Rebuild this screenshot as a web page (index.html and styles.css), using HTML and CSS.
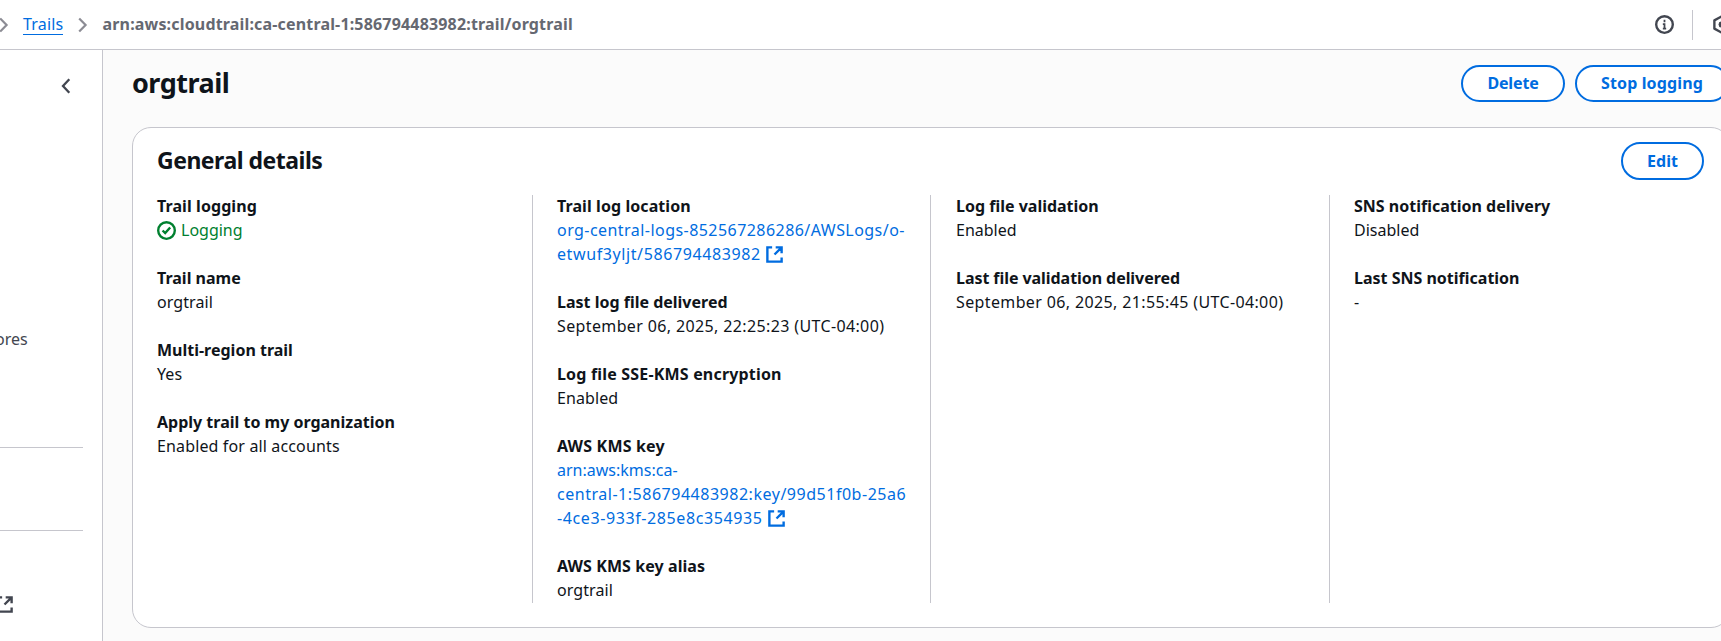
FILE: index.html
```
<!DOCTYPE html>
<html lang="en">
<head>
<meta charset="utf-8">
<title>orgtrail</title>
<link rel="stylesheet" href="styles.css">
</head>
<body>
<svg class="defs" aria-hidden="true">
  <symbol id="external" viewBox="0 0 16 16"><path d="M9 2h5v5M8 8l6-6M14 10.500V14H2V2h4" fill="none" stroke="currentColor" stroke-width="2"/></symbol>
  <symbol id="crumb" viewBox="0 0 10 16"><path d="M1.2 1.4 7.6 8l-6.400 6.600" fill="none" stroke="currentColor" stroke-width="2.200"/></symbol>
</svg>
<header class="topbar">
  <nav class="crumbs">
    <svg class="crumb-icon"><use href="#crumb"/></svg>
    <a class="crumb-link" href="#">Trails</a>
    <svg class="crumb-icon"><use href="#crumb"/></svg>
    <span class="crumb-current">arn:aws:cloudtrail:ca-central-1:586794483982:trail/orgtrail</span>
  </nav>
  <div class="tools">
    <svg class="tool-icon" viewBox="0 0 16 16"><circle cx="8" cy="8" r="7" fill="none" stroke="currentColor" stroke-width="2"/><path d="M8 4v2M6.600 7.600H8V12M6.600 11.400h2.800" fill="none" stroke="currentColor" stroke-width="1.500"/></svg>
    <span class="tool-divider"></span>
    <svg class="tool-icon" viewBox="0 0 16 16"><path d="M8 1.200 14 4.500v7L8 14.800 2 11.500v-7Z" fill="none" stroke="currentColor" stroke-width="2" stroke-linejoin="round"/><circle cx="8" cy="8" r="2.500" fill="currentColor"/></svg>
  </div>
</header>
<div class="body">
  <aside class="sidebar">
    <svg class="collapse" viewBox="0 0 10 16"><path d="M8.300 1.300 2 8l6.300 6.700" fill="none" stroke="currentColor" stroke-width="2.300"/></svg>
    <span class="side-item">ores</span>
    <hr class="side-rule rule-first">
    <hr class="side-rule rule-second">
    <svg class="ext side-ext"><use href="#external"/></svg>
  </aside>
  <main class="main">
    <div class="page-head">
      <h1>orgtrail</h1>
      <div class="actions">
        <button class="btn btn-delete">Delete</button>
        <button class="btn btn-stop">Stop logging</button>
      </div>
    </div>
    <section class="card">
      <div class="card-head">
        <h2>General details</h2>
        <button class="btn btn-edit">Edit</button>
      </div>
      <div class="columns">
        <dl class="col">
          <div><dt class="w-open">Trail logging</dt><dd class="status"><svg class="status-icon" viewBox="0 0 16 16"><circle cx="8" cy="8" r="7" fill="none" stroke="currentColor" stroke-width="2"/><path d="m4.700 8 2.200 2.200 4.200-4.800" fill="none" stroke="currentColor" stroke-width="2"/></svg>Logging</dd></div>
          <div><dt>Trail name</dt><dd class="w-open">orgtrail</dd></div>
          <div><dt>Multi-region trail</dt><dd class="w-open">Yes</dd></div>
          <div><dt>Apply trail to my organization</dt><dd class="w-wide">Enabled for all accounts</dd></div>
        </dl>
        <dl class="col">
          <div><dt class="w-open">Trail log location</dt><dd class="link"><span class="w-bucket">org-central-logs-852567286286/AWSLogs/o-</span><br><span class="w-id">etwuf3yljt/586794483982</span><svg class="ext ext-near"><use href="#external"/></svg></dd></div>
          <div><dt>Last log file delivered</dt><dd class="w-date">September 06, 2025, 22:25:23 (UTC-04:00)</dd></div>
          <div><dt class="w-caps">Log file SSE-KMS encryption</dt><dd class="w-open">Enabled</dd></div>
          <div><dt class="w-caps">AWS KMS key</dt><dd class="link">arn:aws:kms:ca-<br><span class="w-key">central-1:586794483982:key/99d51f0b-25a6</span><br><span class="w-id">-4ce3-933f-285e8c354935</span><svg class="ext"><use href="#external"/></svg></dd></div>
          <div><dt class="w-open">AWS KMS key alias</dt><dd class="w-open">orgtrail</dd></div>
        </dl>
        <dl class="col col-offset">
          <div><dt>Log file validation</dt><dd>Enabled</dd></div>
          <div><dt class="w-tight">Last file validation delivered</dt><dd class="w-date">September 06, 2025, 21:55:45 (UTC-04:00)</dd></div>
        </dl>
        <dl class="col">
          <div><dt>SNS notification delivery</dt><dd>Disabled</dd></div>
          <div><dt>Last SNS notification</dt><dd>-</dd></div>
        </dl>
      </div>
    </section>
  </main>
</div>
</body>
</html>
```
FILE: styles.css
```
* { box-sizing: border-box; }
html, body { height: 100%; }
body {
  margin: 0;
  overflow: hidden;
  display: flex;
  flex-direction: column;
  background: #fff;
  color: #0f141a;
  font: 16px/24px "Noto Sans", sans-serif;
}
h1, h2, dl, dt, dd { margin: 0; }
svg { flex: none; }
.defs { position: absolute; width: 0; height: 0; }

.topbar {
  flex: none;
  height: 50px;
  display: flex;
  align-items: center;
  justify-content: space-between;
  border-bottom: 1px solid #c6c6cd;
  overflow: hidden;
}
.crumbs { display: flex; align-items: center; }
.crumb-icon { width: 10px; height: 16px; margin-left: -1px; color: #8c8c94; }
.crumb-link {
  margin-left: 14px;
  line-height: 20px;
  color: #006ce0;
  text-decoration: none;
  border-bottom: 1px solid #006ce0;
  letter-spacing: .2px;
}
.crumb-link + .crumb-icon { margin-left: 15px; }
.crumb-current {
  margin-left: 14px;
  margin-top: -1px;
  color: #656871;
  font-weight: 700;
  letter-spacing: .17px;
}
.tools { display: flex; align-items: center; color: #424650; margin-right: -10px; }
.tool-icon { width: 19px; height: 19px; }
.tool-divider { width: 1px; height: 30px; margin: 0 19px 0 18px; background: #c6c6cd; }

.body { flex: 1; min-height: 0; display: flex; }
.sidebar {
  flex: none;
  width: 103px;
  display: flex;
  flex-direction: column;
  align-items: flex-start;
  border-right: 1px solid #c6c6cd;
  color: #424650;
  overflow: hidden;
}
.collapse { width: 10px; height: 16px; margin: 28px 0 0 61px; }
.side-item { margin: 233px 0 0 -5px; }
.side-rule { width: 83px; height: 1px; margin: 0; border: 0; background: #c6c6cd; }
.rule-first { margin-top: 96px; }
.rule-second { margin-top: 82px; }

.ext { width: 19px; height: 19px; margin-left: 5px; vertical-align: -4px; }
.ext-near { margin-left: 4px; }
.sidebar .side-ext { margin: 64px 0 0 -5px; }

.main { flex: 1; min-width: 0; padding: 15px 0 0 29px; background: #fbfbfb; }
.page-head { display: flex; justify-content: space-between; width: 1597px; height: 62px; }
h1 { font-size: 27px; line-height: 36px; font-weight: 700; letter-spacing: -.5px; }
.actions { display: flex; gap: 10px; height: 37px; }
.btn {
  height: 37px;
  padding: 0 0 1px;
  border: 2px solid #006ce0;
  border-radius: 20px;
  background: #fff;
  color: #006ce0;
  font: 700 16px/24px "Noto Sans", sans-serif;
}
.btn-delete { width: 104px; letter-spacing: -.15px; }
.btn-stop { width: 154px; letter-spacing: .14px; }
.btn-edit { width: 83px; height: 38px; }

.card {
  width: 1598px;
  height: 501px;
  padding: 14px 25px 24px 24px;
  border: 1px solid #c6c6cd;
  border-radius: 19px;
  background: #fff;
}
.card-head { display: flex; justify-content: space-between; height: 53px; }
h2 { font-size: 23px; line-height: 36px; font-weight: 700; letter-spacing: -.5px; }
.columns { display: grid; grid-template-columns: 375px 398px 399px 1fr; height: 408px; }
.col { display: flex; flex-direction: column; gap: 24px; }
.col > div:first-child { margin-top: -1px; }
.col + .col { border-left: 1px solid #c6c6cd; padding-left: 24px; }
.col + .col-offset { padding-left: 25px; }
dt { font-weight: 700; }
dd { white-space: nowrap; }
.status { display: flex; align-items: center; gap: 5px; color: #00802f; }
.status-icon { width: 19px; height: 19px; }
.link { color: #006ce0; }

/* tracking */
.w-open { letter-spacing: .08px; }
.w-wide { letter-spacing: .14px; }
.w-tight { letter-spacing: -.06px; }
.w-caps { letter-spacing: .18px; }
.w-date { letter-spacing: .37px; }
.w-bucket { letter-spacing: .45px; }
.w-key { letter-spacing: .52px; }
.w-id { letter-spacing: .6px; }
```
